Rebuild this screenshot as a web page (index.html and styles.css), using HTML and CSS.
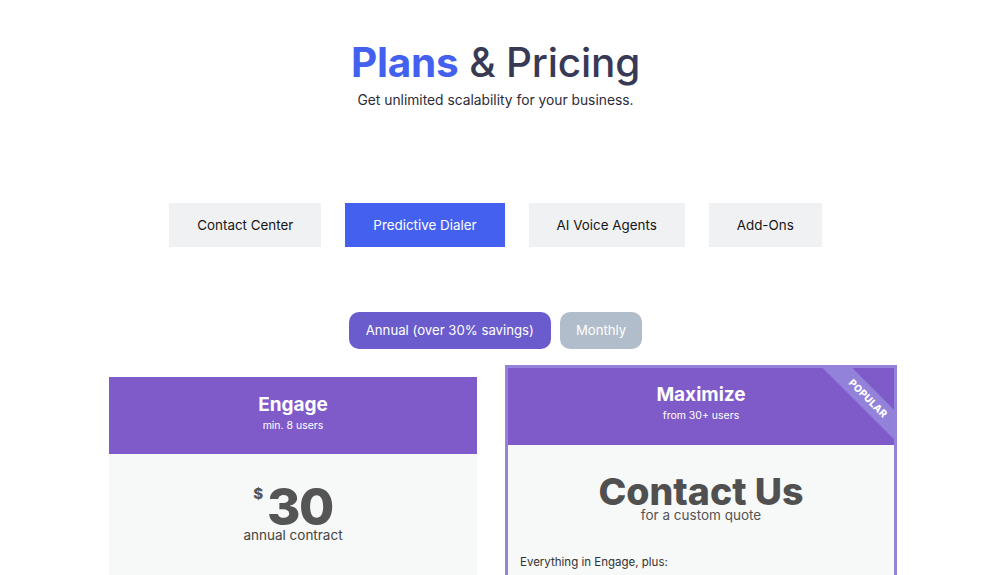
FILE: index.html
```html
<!DOCTYPE html>
<html lang="en">
<head>
<meta charset="utf-8">
<title>Plans &amp; Pricing</title>
<link rel="stylesheet" href="styles.css">
</head>
<body>
<div class="page">
  <header class="hero">
    <h1 class="title"><span class="title-accent">Plans</span> &amp; Pricing</h1>
    <p class="subtitle">Get unlimited scalability for your business.</p>
  </header>

  <nav class="tabs">
    <button class="tab">Contact Center</button>
    <button class="tab tab-active">Predictive Dialer</button>
    <button class="tab">AI Voice Agents</button>
    <button class="tab">Add-Ons</button>
  </nav>

  <div class="billing">
    <button class="bill bill-active">Annual (over 30% savings)</button>
    <button class="bill bill-muted">Monthly</button>
  </div>

  <section class="cards">
    <article class="card card-engage">
      <div class="card-head">
        <h2 class="plan-name">Engage</h2>
        <p class="plan-users">min. 8 users</p>
      </div>
      <div class="card-body body-engage">
        <div class="price"><span class="currency">$</span><span class="amount">30</span></div>
        <p class="price-note">annual contract</p>
      </div>
    </article>

    <article class="card card-featured">
      <div class="card-head head-featured">
        <h2 class="plan-name">Maximize</h2>
        <p class="plan-users">from 30+ users</p>
        <div class="ribbon">POPULAR</div>
      </div>
      <div class="card-body body-featured">
        <div class="contact">Contact Us</div>
        <p class="price-note quote-note">for a custom quote</p>
        <p class="includes">Everything in Engage, plus:</p>
      </div>
    </article>
  </section>
</div>
</body>
</html>
```

FILE: styles.css
```css
* { box-sizing: border-box; }

html, body {
  margin: 0;
  padding: 0;
  background: #ffffff;
}

body {
  font-family: "Inter", "DejaVu Sans", sans-serif;
  color: #222;
  overflow: hidden;
}

.page {
  margin-right: 15px;
}

.hero {
  padding-top: 38px;
  text-align: center;
}

.title {
  margin: 0;
  font-size: 40.5px;
  line-height: 50px;
  font-weight: 500;
  color: #383a55;
  letter-spacing: -0.2px;
}

.title-accent {
  color: #4361ee;
  font-weight: 700;
}

.subtitle {
  margin: 2px 0 0;
  font-size: 13.8px;
  line-height: 20px;
  color: #2c2c3a;
}

.tabs {
  margin-top: 93px;
  display: flex;
  justify-content: center;
  gap: 24px;
}

.tab {
  height: 44px;
  padding: 0 28px;
  border: 0;
  border-radius: 0;
  background: #f0f1f3;
  color: #161616;
  font-family: inherit;
  font-size: 13.4px;
}

.tab-active {
  background: #4361ee;
  color: #ffffff;
}

.billing {
  margin-top: 65px;
  display: flex;
  justify-content: center;
  gap: 9px;
}

.bill {
  height: 37px;
  border: 0;
  border-radius: 10px;
  color: #ffffff;
  font-family: inherit;
  font-size: 13.2px;
  padding-bottom: 3px;
}

.bill-active {
  background: #6b5ccd;
  padding-left: 17px;
  padding-right: 17px;
}

.bill-muted {
  background: #b1bdcb;
  padding-left: 16px;
  padding-right: 16px;
}

.cards {
  margin-top: 16px;
  padding-left: 15px;
  display: flex;
  justify-content: center;
  align-items: flex-start;
  gap: 28px;
}

.card {
  text-align: center;
}

.card-engage {
  width: 368px;
  margin-top: 12px;
}

.card-featured {
  width: 392px;
  border: 3px solid #9583db;
  border-bottom: 0;
}

.card-head {
  height: 77px;
  background: #7f5bc9;
  color: #ffffff;
  padding-top: 16px;
}

.head-featured {
  position: relative;
  overflow: hidden;
  padding-top: 15px;
}

.plan-name {
  margin: 0;
  font-size: 19px;
  line-height: 24px;
  font-weight: 700;
}

.plan-users {
  margin: 0;
  font-size: 10.5px;
  line-height: 18px;
}

.ribbon {
  position: absolute;
  left: 290px;
  top: 20px;
  width: 140px;
  height: 21px;
  background: #9382da;
  transform: rotate(45deg);
  color: #ffffff;
  font-size: 10px;
  font-weight: 800;
  line-height: 20px;
  letter-spacing: 0.2px;
}

.card-body {
  background: #f7f8f8;
  height: 140px;
}

.body-engage {
  padding-top: 31.5px;
}

.price {
  display: flex;
  justify-content: center;
  align-items: flex-start;
  color: #555555;
}

.currency {
  font-size: 15px;
  font-weight: 800;
  line-height: 16px;
  margin-right: 4px;
}

.amount {
  font-size: 51px;
  line-height: 41px;
  font-weight: 800;
  letter-spacing: -1.5px;
}

.price-note {
  margin: 0;
  font-size: 13.5px;
  line-height: 16px;
  color: #444;
}

.body-featured {
  height: 140px;
  padding-top: 29.5px;
}

.contact {
  font-size: 37.5px;
  line-height: 33px;
  font-weight: 800;
  color: #505050;
}

.quote-note {
  margin-top: 0;
  line-height: 14px;
  color: #555;
}

.includes {
  margin: 32px 0 0;
  padding-left: 12px;
  text-align: left;
  font-size: 11.5px;
  line-height: 16px;
  color: #333;
}
```
